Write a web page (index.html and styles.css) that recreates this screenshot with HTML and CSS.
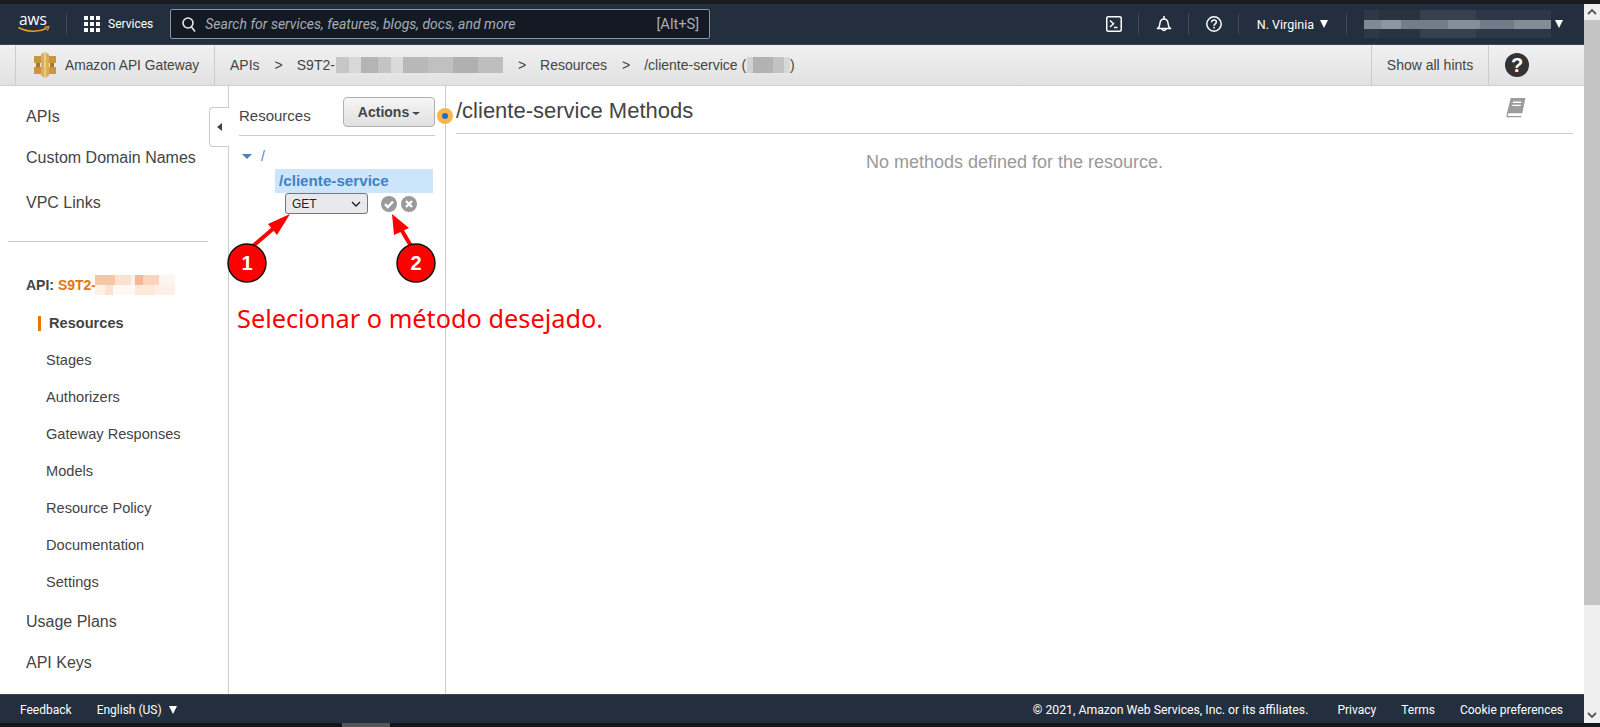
FILE: index.html
```html
<!DOCTYPE html>
<html lang="en">
<head>
  <meta charset="UTF-8">
  <title>Amazon API Gateway</title>
  <link rel="stylesheet" href="styles.css">
</head>
<body>
  <div class="strip"></div>

  <div class="middle">
    <div class="page">

      <header class="topnav">
        <svg class="aws-logo" width="33" height="32" viewBox="0 -6 33 32">
          <text x="1" y="11" class="aws-word">aws</text>
          <path d="M.5 13.500c8 4.800 20 4.800 28 1" fill="none" stroke="#ec9a2b" stroke-width="1.500"/>
          <path d="M26.500 13.200l4.300-.4-1.400 3.800" fill="none" stroke="#ec9a2b" stroke-width="1.200"/>
        </svg>
        <span class="nav-sep sep-logo"></span>
        <svg class="grid-icon" width="16" height="16" viewBox="0 0 16 16" fill="#fff">
          <rect x="0" y="0" width="4" height="4"/><rect x="6" y="0" width="4" height="4"/><rect x="12" y="0" width="4" height="4"/>
          <rect x="0" y="6" width="4" height="4"/><rect x="6" y="6" width="4" height="4"/><rect x="12" y="6" width="4" height="4"/>
          <rect x="0" y="12" width="4" height="4"/><rect x="6" y="12" width="4" height="4"/><rect x="12" y="12" width="4" height="4"/>
        </svg>
        <span class="services">Services</span>
        <div class="search">
          <svg width="14" height="15" viewBox="0 0 14 15" fill="none" stroke="#e6e6e6" stroke-width="1.600">
            <circle cx="6" cy="6" r="5"/><path d="M9.500 10l3.500 4.500"/>
          </svg>
          <span class="search-text">Search for services, features, blogs, docs, and more</span>
          <span class="search-key">[Alt+S]</span>
        </div>
        <div class="nav-right">
          <svg width="16" height="16" viewBox="0 0 16 16" fill="none" stroke="#fff" stroke-width="1.500">
            <rect x=".75" y=".75" width="14.500" height="14.500" rx="1.500"/>
            <path d="M4 4.500l3.500 3.200L4 11M8 11.500h3.500"/>
          </svg>
          <span class="nav-sep"></span>
          <svg width="16" height="16" viewBox="0 0 16 16" fill="none" stroke="#fff" stroke-width="1.500">
            <path d="M.8 12.500c2 0 2.700-1.500 3-4.500.3-3 1.800-5 4.200-5s3.900 2 4.200 5c.3 3 1 4.500 3 4.500z"/>
            <path d="M8 0v3M5.800 12.800a2.300 2.300 0 0 0 4.400 0"/>
          </svg>
          <span class="nav-sep"></span>
          <svg width="16" height="16" viewBox="0 0 16 16" fill="none" stroke="#fff" stroke-width="1.500">
            <circle cx="8" cy="8" r="7.200"/>
            <path d="M5.600 6.200C5.700 4.700 6.700 4 8 4c1.400 0 2.400.8 2.400 2 0 1.800-2.400 1.900-2.400 3.700"/>
            <path d="M8 10.800v1.700"/>
          </svg>
          <span class="nav-sep"></span>
          <span class="region">N. Virginia</span>
          <span class="caret"></span>
          <span class="nav-sep sep-account"></span>
          <span class="blur blur-account"></span>
          <span class="caret"></span>
        </div>
      </header>

      <div class="subnav">
        <div class="brand">
          <svg width="24" height="26" viewBox="0 0 24 26">
            <path fill="#c8963e" d="M1 4h7v7H1zM1 15h7v7H1zM16 4h7v7h-7zM16 15h7v7h-7z"/>
            <path fill="#a9782b" d="M3 11h4v4H3zM17 11h4v4h-4z"/>
            <path fill="#dcae55" d="M8 2.500L11.500 0v26L8 23.500zM16 2.500L12.500 0v26l3.500-2.500z"/>
            <path fill="#f0ca78" d="M11 8h2v3h-2zM11 15h2v3h-2z"/>
          </svg>
          <span class="brand-name">Amazon API Gateway</span>
        </div>
        <nav class="crumbs">
          <span>APIs</span>
          <span class="crumb-sep">&gt;</span>
          <span class="crumb-name">S9T2-<span class="blur blur-name"></span></span>
          <span class="crumb-sep">&gt;</span>
          <span>Resources</span>
          <span class="crumb-sep">&gt;</span>
          <span class="crumb-name">/cliente-service (<span class="blur blur-id"></span>)</span>
        </nav>
        <div class="hints">Show all hints</div>
        <div class="help">
          <svg width="24" height="24" viewBox="0 0 24 24">
            <circle cx="12" cy="12" r="12" fill="#333"/>
            <text x="12" y="19" class="help-mark">?</text>
          </svg>
        </div>
      </div>

      <div class="main">
        <aside class="sidebar">
          <ul class="side-top">
            <li>APIs</li>
            <li class="side-custom">Custom Domain Names</li>
            <li class="side-vpc">VPC Links</li>
          </ul>
          <hr class="side-rule">
          <div class="api-name">API: <span class="api-orange">S9T2-</span><span class="blur blur-api"></span></div>
          <ul class="side-sub">
            <li class="current">Resources</li>
            <li>Stages</li>
            <li>Authorizers</li>
            <li>Gateway Responses</li>
            <li>Models</li>
            <li>Resource Policy</li>
            <li>Documentation</li>
            <li>Settings</li>
          </ul>
          <ul class="side-bottom">
            <li>Usage Plans</li>
            <li>API Keys</li>
          </ul>
        </aside>

        <section class="resources">
          <div class="collapse-tab"><span class="tab-arrow"></span></div>
          <div class="res-head">
            <span class="res-title">Resources</span>
            <button class="actions">Actions<span class="actions-caret"></span></button>
          </div>
          <div class="tree-root"><span class="tree-arrow"></span><span class="tree-slash">/</span></div>
          <div class="tree-item">/cliente-service</div>
          <div class="method-row">
            <div class="method-select">
              <span>GET</span>
              <svg width="10" height="6" viewBox="0 0 10 6" fill="none" stroke="#222" stroke-width="1.400"><path d="M1 1l4 4 4-4"/></svg>
            </div>
            <svg class="round-btn" width="16" height="16" viewBox="0 0 16 16">
              <circle cx="8" cy="8" r="8" fill="#9a9a9a"/>
              <path d="M4 8.200l2.800 2.800L12 5.600" fill="none" stroke="#fff" stroke-width="2.400"/>
            </svg>
            <svg class="round-btn" width="16" height="16" viewBox="0 0 16 16">
              <circle cx="8" cy="8" r="8" fill="#9a9a9a"/>
              <path d="M5 5l6 6M11 5l-6 6" fill="none" stroke="#fff" stroke-width="2.400"/>
            </svg>
          </div>
        </section>

        <section class="content">
          <div class="content-head">
            <h1>/cliente-service Methods</h1>
            <svg width="22" height="21" viewBox="0 0 20 20">
              <path fill="#9c9c9c" d="M5 1h14l-3 14.500H3.500c-1 0-1.500 1-1.500 1.500s.6 1.200 1.500 1.200H15l.3 1H2.500C1.200 20 .5 18.500 1 17z"/>
              <path fill="none" stroke="#fff" stroke-width="1.300" d="M7 5h8M6.500 8h8"/>
            </svg>
          </div>
          <p class="empty">No methods defined for the resource.</p>
        </section>

        <div class="hint-dot"></div>
        <svg class="marks" width="460" height="190" viewBox="0 0 460 190">
          <g fill="#f00" stroke="#f00">
            <path d="M253 160L274 142" stroke-width="4" fill="none"/>
            <path d="M290 128L268 138L277 149Z" stroke="none"/>
            <path d="M411 160L401 143" stroke-width="4" fill="none"/>
            <path d="M392 128L394 149L409 142Z" stroke="none"/>
          </g>
          <circle class="mark-ring" cx="247" cy="177" r="19"/>
          <circle class="mark-ring" cx="416" cy="177" r="19"/>
          <text class="mark-num" x="247" y="184">1</text>
          <text class="mark-num" x="416" y="184">2</text>
        </svg>
        <div class="note">Selecionar o método desejado.</div>
      </div>

      <footer class="footer">
        <span class="foot-feedback">Feedback</span>
        <span class="foot-lang">English (US)</span>
        <span class="caret"></span>
        <span class="foot-copy">© 2021, Amazon Web Services, Inc. or its affiliates.</span>
        <span class="foot-link foot-privacy">Privacy</span>
        <span class="foot-link">Terms</span>
        <span class="foot-link foot-last">Cookie preferences</span>
      </footer>
    </div>

    <div class="scrollbar">
      <svg width="16" height="16" viewBox="0 0 16 16" fill="none" stroke="#555" stroke-width="1.800"><path d="M4 10l4-4 4 4"/></svg>
      <div class="scroll-thumb"></div>
      <svg width="16" height="16" viewBox="0 0 16 16" fill="none" stroke="#555" stroke-width="1.800"><path d="M4 6l4 4 4-4"/></svg>
    </div>
  </div>

  <div class="strip strip-bottom"><div class="hscroll-thumb"></div></div>
</body>
</html>
```

FILE: styles.css
```css
* {
  box-sizing: border-box;
}

html, body {
  height: 100%;
}

body {
  margin: 0;
  display: flex;
  flex-direction: column;
  overflow: hidden;
  font-family: "Liberation Sans", Arial, sans-serif;
  color: #444;
  background-color: #fff;
}

ul {
  list-style: none;
  margin: 0;
  padding: 0;
}

.strip {
  height: 4px;
  background-color: #1b1b1f;
  flex: none;
}

.strip-bottom {
  background-color: #14161a;
  padding-left: 342px;
}

.hscroll-thumb {
  width: 48px;
  height: 4px;
  background-color: #555;
}

.middle {
  flex: 1;
  display: flex;
  min-height: 0;
}

.page {
  flex: 1;
  display: flex;
  flex-direction: column;
  min-width: 0;
}

.scrollbar {
  width: 16px;
  background-color: #efefef;
  display: flex;
  flex-direction: column;
}

.scroll-thumb {
  flex: none;
  height: 585px;
  background-color: #c4c4c4;
}

.scrollbar svg:last-child {
  margin-top: auto;
}

/* top nav */
.topnav {
  height: 41px;
  flex: none;
  display: flex;
  align-items: center;
  padding-left: 18px;
  background-color: #232f3e;
  border-bottom: 1px solid #3d4754;
  color: #fff;
}

.aws-logo {
  flex: none;
}

.aws-word {
  font-family: "Open Sans", sans-serif;
  font-size: 15.500px;
  fill: #fff;
}

.nav-sep {
  width: 1px;
  height: 22px;
  margin-right: 1px;
  background-color: #414b58;
  flex: none;
}

.sep-logo {
  margin-left: 15px;
  margin-right: 0;
}

.grid-icon {
  margin-left: 17px;
  flex: none;
}

.services {
  margin-left: 8px;
  font-family: Roboto, sans-serif;
  font-size: 12px;
}

.search {
  margin-left: 17px;
  width: 540px;
  height: 30px;
  display: flex;
  align-items: center;
  padding: 0 10px 0 11px;
  background-color: #141a24;
  border: 1px solid #8a929c;
  border-radius: 2px;
  color: #a6adb6;
  font-family: Roboto, sans-serif;
  font-size: 14px;
}

.search-text {
  margin-left: 9px;
  font-style: italic;
}

.search-key {
  margin-left: auto;
  font-size: 14.700px;
}

.nav-right {
  margin-left: auto;
  display: flex;
  align-items: center;
  gap: 16px;
  padding-right: 21px;
}

.region {
  font-family: Roboto, sans-serif;
  font-size: 12.500px;
  margin: 0 -10px 0 1px;
}

.caret {
  width: 0;
  height: 0;
  border-left: 4.500px solid transparent;
  border-right: 4.500px solid transparent;
  border-top: 8px solid #fff;
  flex: none;
}

.sep-account {
  margin-left: 2px;
}

.blur {
  display: inline-block;
  vertical-align: middle;
}

.blur-account {
  width: 187px;
  height: 28px;
  margin-right: -12px;
  background:
    linear-gradient(90deg, #7f8994 0 9%, #8d96a0 9% 20%, #737d89 20% 45%, #858e98 45% 62%, #717b87 62% 80%, #838c96 80% 100%) 0 10px / 100% 9px no-repeat,
    linear-gradient(90deg, #2c3847 0 8%, #27333f 8% 30%, #36414f 30% 60%, #2c3847 60% 100%) 0 0 / 100% 28px no-repeat;
}

/* sub nav */
.subnav {
  height: 41px;
  flex: none;
  display: flex;
  align-items: center;
  padding-left: 15px;
  background: linear-gradient(#f1f1f1, #e1e1e1);
  border-bottom: 1px solid #cfcfcf;
  font-size: 14px;
  color: #444;
}

.brand {
  height: 100%;
  width: 200px;
  display: flex;
  align-items: center;
  gap: 8px;
  padding-left: 17px;
  border-left: 1px solid #ccc;
  border-right: 1px solid #ccc;
  white-space: nowrap;
}

.brand-name {
  font-size: 13.800px;
}

.crumbs {
  display: flex;
  align-items: center;
  margin-left: 15px;
}

.crumb-sep {
  margin: 0 14px 0 15px;
}

.crumb-name {
  display: flex;
  align-items: center;
}

.blur-name {
  width: 167px;
  height: 16px;
  margin-left: 1px;
  background: linear-gradient(90deg, #c6c6c6 0 8%, #d8d8d8 8% 15%, #b4b4b4 15% 25%, #c4c4c4 25% 33%, #dcdad6 33% 40%, #b8b8b8 40% 55%, #c0c0c0 55% 70%, #b0b0b0 70% 85%, #bebebe 85% 100%);
}

.blur-id {
  width: 43px;
  height: 16px;
  margin-left: 1px;
  background: linear-gradient(90deg, #d2d2d2 0 15%, #b2b2b2 15% 60%, #c2c2c2 60% 85%, #d8d8d8 85% 100%);
}

.hints {
  margin-left: auto;
  height: 100%;
  width: 118px;
  display: flex;
  align-items: center;
  justify-content: center;
  border-left: 1px solid #ccc;
  border-right: 1px solid #ccc;
}

.help {
  width: 95px;
  display: flex;
  padding-left: 16px;
}

.help-mark {
  font-family: "Liberation Sans", sans-serif;
  font-weight: bold;
  font-size: 20px;
  text-anchor: middle;
  fill: #fff;
}

/* three columns */
.main {
  flex: 1;
  display: flex;
  min-height: 0;
  position: relative;
}

.sidebar {
  width: 229px;
  flex: none;
  border-right: 1px solid #ccc;
  padding-top: 20px;
  font-size: 16px;
  color: #444;
}

.side-top li {
  padding-left: 26px;
  line-height: 22px;
}

.side-custom {
  margin-top: 19px;
}

.side-vpc {
  margin-top: 23px;
}

.side-rule {
  margin: 27px 20px 0 8px;
  border: 0;
  border-top: 1px solid #ccc;
}

.api-name {
  margin-top: 33px;
  padding-left: 26px;
  font-size: 14px;
  font-weight: bold;
  line-height: 18px;
  display: flex;
  align-items: center;
  white-space: pre;
}

.api-orange {
  color: #ec7211;
}

.blur-api {
  width: 80px;
  height: 20px;
  margin-left: -1px;
  background:
    linear-gradient(90deg, #f9c6a4 0 25%, #fbe1d0 25% 45%, #fdf1e9 45% 50%, #f6b892 50% 60%, #fbd4bb 60% 80%, #fef5ef 80% 100%) 0 0 / 100% 10px no-repeat,
    linear-gradient(90deg, #fef1e8 0 12%, #fbe3d4 12% 22%, #fff8f3 22% 50%, #fde8da 50% 75%, #fdf0e8 75% 100%) 0 10px / 100% 10px no-repeat;
}

.side-sub {
  margin-top: 10px;
  font-size: 14.600px;
}

.side-sub li {
  padding-left: 46px;
  height: 37px;
  line-height: 37px;
}

.side-sub .current {
  position: relative;
  padding-left: 49px;
  font-weight: bold;
  color: #444;
}

.side-sub .current::before {
  content: "";
  position: absolute;
  left: 38px;
  top: 11px;
  width: 3px;
  height: 15px;
  background-color: #e77600;
}

.side-bottom {
  margin-top: 0;
}

.side-bottom li {
  padding-left: 26px;
  height: 41px;
  line-height: 41px;
}

.resources {
  width: 217px;
  flex: none;
  position: relative;
  border-right: 1px solid #ccc;
  padding: 11px 10px 0 10px;
}

.collapse-tab {
  position: absolute;
  left: -20px;
  top: 21px;
  width: 20px;
  height: 40px;
  background-color: #fff;
  border: 1px solid #ccc;
  border-right: 0;
  border-radius: 4px 0 0 4px;
  display: flex;
  align-items: center;
  justify-content: center;
}

.tab-arrow {
  border-top: 4px solid transparent;
  border-bottom: 4px solid transparent;
  border-right: 5px solid #444;
}

.res-head {
  height: 39px;
  display: flex;
  align-items: flex-start;
  justify-content: space-between;
  border-bottom: 1px solid #ccc;
}

.res-title {
  font-size: 15px;
  line-height: 38px;
}

.actions {
  width: 92px;
  height: 30px;
  padding: 0;
  background: linear-gradient(#f6f6f6, #e0e0e0);
  border: 1px solid #b0b0b0;
  border-radius: 4px;
  font-family: inherit;
  font-size: 14px;
  font-weight: bold;
  color: #444;
}

.actions-caret {
  display: inline-block;
  margin-left: 3px;
  vertical-align: middle;
  border-left: 4px solid transparent;
  border-right: 4px solid transparent;
  border-top: 3px solid #444;
}

.tree-root {
  display: flex;
  align-items: center;
  height: 18px;
  margin-top: 11px;
  padding-left: 3px;
  color: #4a86c5;
  font-size: 14px;
}

.tree-arrow {
  border-left: 5px solid transparent;
  border-right: 5px solid transparent;
  border-top: 5px solid #4a7fc0;
}

.tree-slash {
  margin-left: 9px;
}

.tree-item {
  margin: 4px 2px 0 36px;
  height: 24px;
  line-height: 24px;
  padding-left: 4px;
  background-color: #cce5fb;
  color: #4081c4;
  font-size: 15.200px;
  font-weight: bold;
}

.method-row {
  margin: 0 0 0 46px;
  display: flex;
  align-items: center;
  height: 21px;
}

.method-select {
  width: 83px;
  height: 21px;
  padding: 0 6px;
  display: flex;
  align-items: center;
  justify-content: space-between;
  background-color: #e9e9ed;
  border: 1px solid #767676;
  border-radius: 3px;
  font-size: 12px;
  color: #222;
}

.round-btn {
  margin-left: 4px;
  flex: none;
}

.method-select + .round-btn {
  margin-left: 13px;
}

.content {
  flex: 1;
  min-width: 0;
  padding: 0 11px 0 10px;
}

.content-head {
  height: 48px;
  display: flex;
  align-items: flex-start;
  justify-content: space-between;
  border-bottom: 1px solid #ccc;
  padding: 11px 46px 0 0;
}

.content-head h1 {
  margin: 0;
  font-size: 22px;
  font-weight: normal;
  line-height: 28px;
  color: #444;
}

.empty {
  margin: 17px 0 0;
  text-align: center;
  font-size: 18px;
  line-height: 22px;
  color: #999;
}

/* things lying over the columns */
.hint-dot {
  position: absolute;
  left: 437px;
  top: 22px;
  width: 16px;
  height: 16px;
  border-radius: 50%;
  background-color: #1f6fc4;
  border: 5px solid #f8b64e;
}

.marks {
  position: absolute;
  left: 0;
  top: 0;
  pointer-events: none;
  overflow: visible;
}

.mark-ring {
  fill: #f00;
  stroke: #111;
  stroke-width: 1.500;
}

.mark-num {
  font-family: "Liberation Sans", sans-serif;
  font-size: 20px;
  font-weight: bold;
  text-anchor: middle;
  fill: #fff;
}

.note {
  position: absolute;
  left: 237px;
  top: 213px;
  font-family: "Noto Sans", sans-serif;
  font-size: 25.300px;
  line-height: 38px;
  color: #f00;
  white-space: nowrap;
}

/* footer */
.footer {
  height: 29px;
  flex: none;
  display: flex;
  align-items: center;
  padding: 1px 0 0 20px;
  background-color: #232f3e;
  border-top: 1px solid #3d4754;
  color: #fff;
  font-family: Roboto, sans-serif;
  font-size: 12px;
}

.foot-lang {
  margin: 0 7px 0 25px;
}

.foot-copy {
  margin-left: auto;
  font-size: 12.250px;
}

.foot-link {
  margin-left: 25px;
}

.foot-privacy {
  margin-left: 29px;
}

.foot-last {
  margin-right: 21px;
}
```
